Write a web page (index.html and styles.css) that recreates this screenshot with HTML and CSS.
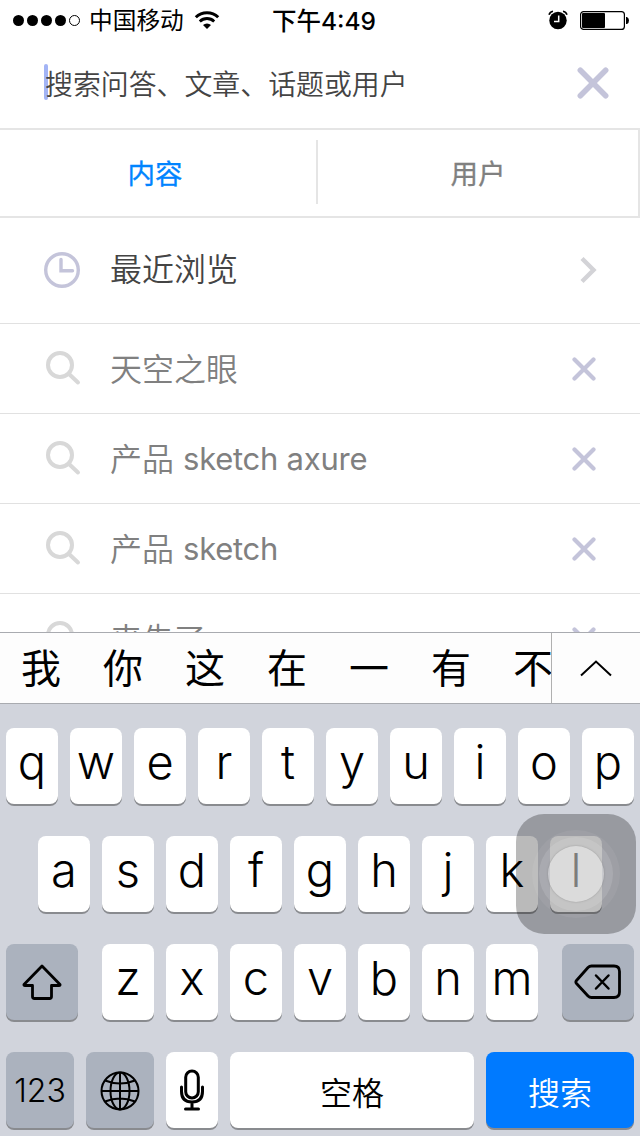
FILE: index.html
```html
<!DOCTYPE html>
<html lang="zh">
<head>
  <meta charset="UTF-8" />
  <title>搜索</title>
  <link rel="stylesheet" href="styles.css">
</head>
<body>
  <svg class="defs" width="0" height="0">
    <symbol id="search" viewBox="0 0 36 36">
      <circle cx="15" cy="15" r="12" fill="none" stroke="currentColor" stroke-width="4" />
      <path d="M24 24L33 32.5" stroke="currentColor" stroke-width="4" stroke-linecap="round" />
    </symbol>
    <symbol id="close" viewBox="0 0 24 24">
      <path d="M2.5 2.5L21.5 21.5M21.5 2.5L2.5 21.5" stroke="currentColor" stroke-width="4.2" stroke-linecap="round" />
    </symbol>
  </svg>

  <div class="screen">
    <!-- 状态栏 -->
    <header class="status">
      <div class="signal"><i></i><i></i><i></i><i></i><i class="empty"></i></div>
      <span class="carrier">中国移动</span>
      <svg class="wifi" width="26" height="20" viewBox="0 0 26 20">
        <path d="M1.8 7.2a16 16 0 0 1 22.4 0" fill="none" stroke="#000" stroke-width="3" />
        <path d="M5.8 11.4a10.4 10.4 0 0 1 14.4 0" fill="none" stroke="#000" stroke-width="2.8" />
        <path d="M13 19l-4-4a5.8 5.8 0 0 1 8 0z" />
      </svg>
      <span class="time">下午4:49</span>
      <svg class="alarm" width="20" height="20" viewBox="0 0 20 20">
        <circle cx="10" cy="10.5" r="8.7" />
        <path d="M1 4.8Q2 1.8 5 1.3M19 4.8Q18 1.8 15 1.3" fill="none" stroke="#000" stroke-width="1.6" />
        <path d="M10.7 5.5v6H6" fill="none" stroke="#fff" stroke-width="1.5" />
      </svg>
      <svg class="battery" width="49" height="19" viewBox="0 0 49 19">
        <rect x=".6" y=".6" width="43.8" height="17.8" rx="3" fill="none" stroke="#000" stroke-width="1.2" />
        <rect x="2" y="2" width="23" height="15" rx="1" />
        <path d="M46 6h1q2 1 2 3.5t-2 3.5h-1z" />
      </svg>
    </header>

    <div class="search-bar">
      <span class="caret"></span>
      <span class="placeholder">搜索问答、文章、话题或用户</span>
      <svg class="clear" width="32" height="32"><use href="#close" /></svg>
    </div>

    <nav class="tabs">
      <div class="tab active">内容</div>
      <div class="tab">用户</div>
    </nav>

    <ul class="list">
      <li class="row recent">
        <svg class="icon clock" width="38" height="38" viewBox="0 0 38 38" fill="none" stroke="currentColor">
          <circle cx="19" cy="19" r="16.3" stroke-width="3.4" />
          <path d="M18 8.5V19.7H29.5" stroke-width="3.4" stroke-linecap="round" />
        </svg>
        <span class="label">最近浏览</span>
        <svg class="arrow" width="18" height="28" viewBox="0 0 18 28">
          <path d="M3 2.5L14.5 14L3 25.5" fill="none" stroke="currentColor" stroke-width="4.4" />
        </svg>
      </li>
      <li class="row">
        <svg class="icon" width="36" height="36"><use href="#search" /></svg>
        <span class="label">天空之眼</span>
        <svg class="remove" width="24" height="24"><use href="#close" /></svg>
      </li>
      <li class="row">
        <svg class="icon" width="36" height="36"><use href="#search" /></svg>
        <span class="label">产品 <span class="latin">sketch axure</span></span>
        <svg class="remove" width="24" height="24"><use href="#close" /></svg>
      </li>
      <li class="row">
        <svg class="icon" width="36" height="36"><use href="#search" /></svg>
        <span class="label">产品 <span class="latin">sketch</span></span>
        <svg class="remove" width="24" height="24"><use href="#close" /></svg>
      </li>
      <li class="row">
        <svg class="icon" width="36" height="36"><use href="#search" /></svg>
        <span class="label">来先了</span>
        <svg class="remove" width="24" height="24"><use href="#close" /></svg>
      </li>
    </ul>

    <!-- 键盘 -->
    <div class="candidates">
      <div class="words">
        <span>我</span><span>你</span><span>这</span><span>在</span><span>一</span><span>有</span><span>不</span>
      </div>
      <div class="expand">
        <svg width="34" height="20" viewBox="0 0 34 20">
          <path d="M2 17.5L17 3.5L32 17.5" fill="none" stroke="#000" stroke-width="2" />
        </svg>
      </div>
    </div>

    <div class="keyboard">
      <div class="keys">
        <b>q</b><b>w</b><b>e</b><b>r</b><b>t</b><b>y</b><b>u</b><b>i</b><b>o</b><b>p</b>
      </div>
      <div class="keys">
        <b>a</b><b>s</b><b>d</b><b>f</b><b>g</b><b>h</b><b>j</b><b>k</b><b>l</b>
      </div>
      <div class="keys spread">
        <div class="key gray wide">
          <svg width="40" height="36" viewBox="0 0 40 36">
            <path d="M20 2L38 20.5Q38.5 21.5 37 21.5H29.5V32.5Q29.5 34.5 27.5 34.5H12.5Q10.5 34.5 10.5 32.5V21.5H3Q1.5 21.5 2 20.5Z" fill="none" stroke="#000" stroke-width="2.8" stroke-linejoin="round" />
          </svg>
        </div>
        <div class="keys">
          <b>z</b><b>x</b><b>c</b><b>v</b><b>b</b><b>n</b><b>m</b>
        </div>
        <div class="key gray wide">
          <svg width="48" height="36" viewBox="0 0 48 36" fill="none" stroke="#000" stroke-linejoin="round" stroke-linecap="round">
            <path d="M17.5 2H40Q45.5 2 45.5 7.5V28Q45.5 33.5 40 33.5H17.5Q15.5 33.5 14 32L2.5 19.5Q1.2 18 2.5 16.5L14 3.5Q15.5 2 17.5 2Z" stroke-width="2.8" />
            <path d="M22 11.5L34.5 24.5M34.5 11.5L22 24.5" stroke-width="2.5" />
          </svg>
        </div>
      </div>
      <div class="keys">
        <div class="key gray num">123</div>
        <div class="key gray num">
          <svg width="40" height="40" viewBox="0 0 40 40" fill="none" stroke="#000" stroke-width="2">
            <circle cx="20" cy="20" r="18.5" />
            <ellipse cx="20" cy="20" rx="9.5" ry="18.5" />
            <path d="M20 1.5V38.5M1.5 20H38.5M5 9.5Q20 15.5 35 9.5M5 30.5Q20 24.5 35 30.5" />
          </svg>
        </div>
        <div class="key mic">
          <svg width="26" height="42" viewBox="0 0 26 42" fill="none" stroke="#000" stroke-width="3" stroke-linecap="round">
            <rect x="6.7" y="2" width="12.6" height="27" rx="6.3" />
            <path d="M2.5 18V22.5Q2.5 33 13 33T23.5 22.5V18M13 33V40M6.5 40H19.5" />
          </svg>
        </div>
        <div class="key space">空格</div>
        <div class="key go">搜索</div>
      </div>
    </div>

    <!-- 悬浮按钮 -->
    <div class="assistive"><i class="ring outer"></i><i class="ring middle"></i><i class="ring inner"></i></div>
  </div>
</body>
</html>
```
FILE: styles.css
```css
* {
  box-sizing: border-box;
}

body {
  margin: 0;
  font-family: Inter, "Noto Sans CJK SC", sans-serif;
  background: #fff;
  color: #000;
}

svg {
  display: block;
  flex: none;
}

.defs {
  position: absolute;
}

.screen {
  position: relative;
  display: flex;
  flex-direction: column;
  width: 640px;
  height: 1136px;
  overflow: hidden;
}

/* 状态栏 */
.status {
  display: flex;
  align-items: center;
  height: 40px;
  padding: 0 11px 0 13px;
}

.signal {
  display: flex;
  gap: 3px;
}

.signal i {
  width: 11px;
  height: 11px;
  border-radius: 50%;
  background: #000;
}

.signal .empty {
  background: none;
  border: 1px solid #000;
}

.carrier {
  width: 96px;
  margin-left: 9px;
  padding-top: 2px;
  font-size: 23.7px;
  line-height: 40px;
}

.wifi {
  margin-left: 9px;
}

.time {
  margin-left: 52px;
  padding-top: 2px;
  font-size: 24.5px;
  font-weight: 500;
  line-height: 40px;
  white-space: nowrap;
}

.alarm {
  margin-left: auto;
  margin-right: 12px;
}

/* 搜索框 */
.search-bar {
  display: flex;
  align-items: center;
  height: 90px;
  padding: 0 31px 2px 44px;
  border-bottom: 2px solid #e5e5e5;
}

.caret {
  width: 4px;
  height: 36px;
  margin-top: -2px;
  border-radius: 2px;
  background: #a3b4f5;
}

.placeholder {
  margin-left: -3px;
  font-size: 27.9px;
  font-weight: 350;
  color: #444;
}

.clear {
  margin-left: auto;
  color: #c4c4da;
}

.tabs {
  display: flex;
  align-items: center;
  height: 88px;
  padding-bottom: 2px;
  border-right: 2px solid #e5e5e5;
  border-bottom: 2px solid #e5e5e5;
}

.tab {
  flex: 1;
  height: 64px;
  padding-top: 2px;
  font-size: 27.5px;
  line-height: 64px;
  text-align: center;
  color: #808080;
  -webkit-text-stroke: 0.3px;
}

.tab.active {
  flex: none;
  width: 318px;
  padding-right: 6px;
  border-right: 2px solid #e5e5e5;
  color: #0084ff;
}

/* 历史记录 */
.list {
  flex: 1;
  min-height: 0;
  margin: 0;
  padding: 0;
  overflow: hidden;
  list-style: none;
}

.row {
  display: flex;
  align-items: center;
  height: 90px;
  padding: 0 44px 0 45px;
  border-bottom: 1px solid #e1e1e1;
}

.row.recent {
  height: 106px;
  padding: 0 43px 2px;
}

.icon {
  margin-top: -1px;
  color: #d8d8d8;
}

.icon.clock {
  margin-top: 0;
  color: #c4c4da;
}

.label {
  margin-left: 29px;
  padding-top: 2px;
  font-size: 32px;
  font-weight: 350;
  line-height: 86px;
  color: #808080;
}

.latin {
  font-size: 31px;
  font-weight: 400;
  line-height: 1;
  letter-spacing: -0.25px;
  vertical-align: 1px;
}

.recent .label {
  padding-top: 0;
  color: #444;
}

.remove {
  margin-left: auto;
  color: #c4c4da;
}

.arrow {
  margin-left: auto;
  color: #d3d3d7;
}

/* 候选词 */
.candidates {
  display: flex;
  height: 72px;
  background: #fdfdfd;
  border-top: 1px solid #a9abb0;
  border-bottom: 1px solid #a9abb0;
}

.words {
  display: flex;
  gap: 42px;
  width: 551px;
  padding: 1px 0 0 21px;
  overflow: hidden;
  font-size: 40px;
  line-height: 70px;
}

.expand {
  display: flex;
  flex: 1;
  align-items: center;
  justify-content: center;
  border-left: 1px solid #b0b0b0;
}

/* 键盘 */
.keyboard {
  display: flex;
  flex-direction: column;
  gap: 32px;
  height: 432px;
  padding: 24px 6px 0;
  background: #d1d4dc;
}

.keys {
  display: flex;
  justify-content: center;
  gap: 12px;
}

.keys.spread {
  justify-content: space-between;
}

.keys b,
.key {
  display: flex;
  align-items: center;
  justify-content: center;
  width: 52px;
  height: 76px;
  border-radius: 8px;
  background: #fff;
  box-shadow: 0 2px 0 #898b8f;
  font-size: 47px;
  font-weight: 350;
}

.keys b {
  padding-bottom: 9px;
}

.key.gray {
  background: #abb2be;
}

.key.wide {
  width: 72px;
}

.key.num {
  width: 68px;
  padding-top: 1px;
  font-size: 32px;
}

.key.space {
  width: 244px;
  padding-top: 2px;
  font-size: 32px;
}

.key.go {
  width: 148px;
  padding-top: 2px;
  background: #007aff;
  color: #fff;
  font-size: 32px;
}

/* 悬浮按钮盖在键盘上 */
.assistive {
  position: absolute;
  left: 516px;
  top: 814px;
  display: grid;
  place-items: center;
  width: 120px;
  height: 120px;
  border-radius: 28px;
  background: rgba(0, 0, 0, 0.27);
}

.ring {
  grid-area: 1 / 1;
  border-radius: 50%;
}

.ring.outer {
  width: 88px;
  height: 88px;
  background: rgba(255, 255, 255, 0.06);
}

.ring.middle {
  width: 74px;
  height: 74px;
  background: rgba(255, 255, 255, 0.12);
}

.ring.inner {
  width: 56px;
  height: 56px;
  background: rgba(255, 255, 255, 0.38);
  box-shadow: 0 0 2px rgba(120, 120, 120, 0.6);
}
```
